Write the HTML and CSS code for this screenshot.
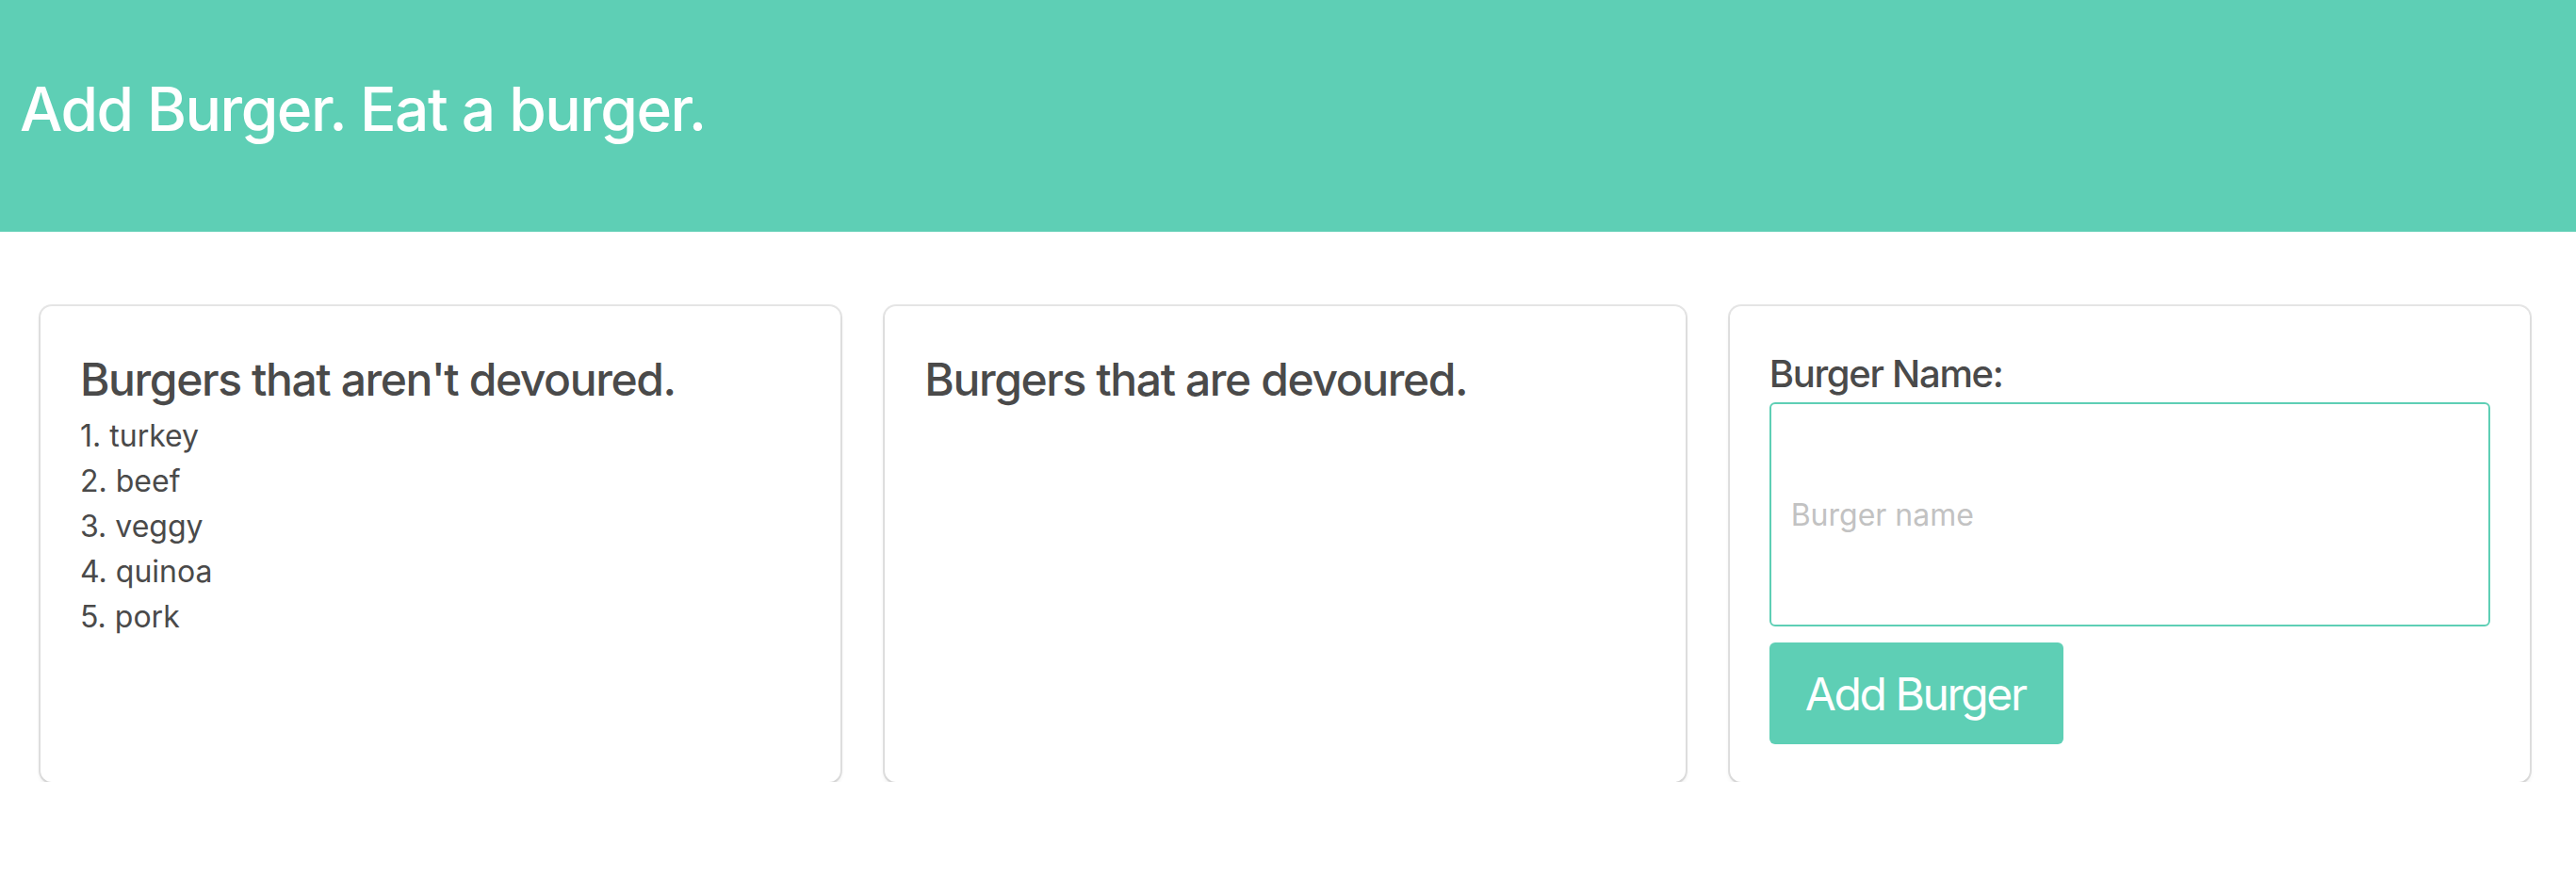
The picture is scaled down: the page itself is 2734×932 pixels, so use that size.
FILE: index.html
```html
<!DOCTYPE html>
<html lang="en">
<head>
<meta charset="utf-8">
<title>Burgers</title>
<link rel="stylesheet" href="styles.css">
</head>
<body>
<header class="hero">
  <h1 class="hero-title">Add Burger. Eat a burger.</h1>
</header>
<main class="columns">
  <section class="box">
    <h3 class="box-title">Burgers that aren't devoured.</h3>
    <ol class="burger-list">
      <li>1. turkey</li>
      <li>2. beef</li>
      <li>3. veggy</li>
      <li>4. quinoa</li>
      <li>5. pork</li>
    </ol>
  </section>
  <section class="box">
    <h3 class="box-title">Burgers that are devoured.</h3>
  </section>
  <section class="box">
    <form class="burger-form">
      <label class="label" for="burger">Burger Name:</label>
      <input class="input" id="burger" type="text" placeholder="Burger name">
      <button class="button" type="button">Add Burger</button>
    </form>
  </section>
</main>
</body>
</html>
```

FILE: styles.css
```css
* { box-sizing: border-box; }

html, body {
  margin: 0;
  padding: 0;
  background: #ffffff;
}

body {
  font-family: Inter, "Noto Sans", "Liberation Sans", sans-serif;
  color: #4a4a4a;
  font-size: 32px;
  line-height: 48px;
}

.hero {
  background: #5ecfb5;
  height: 246px;
  padding: 80px 21px 0;
}

.hero-title {
  margin: 0;
  color: #ffffff;
  font-size: 64px;
  line-height: 72px;
  font-weight: 500;
  letter-spacing: -1.5px;
}

.columns {
  display: flex;
  gap: 47px;
  padding: 79px 49px 0 43px;
}

.box {
  flex: 1 1 0;
  height: 505px;
  background: #ffffff;
  border-radius: 12px;
  box-shadow: 0 3px 5px rgba(10, 10, 10, 0.1), 0 0 0 2px rgba(10, 10, 10, 0.1);
  padding: 42px;
}

.box-title {
  margin: 0;
  font-size: 48px;
  line-height: 72px;
  font-weight: 500;
  color: #4a4a4a;
  letter-spacing: -1.4px;
}

.burger-list {
  list-style: none;
  margin: 0;
  padding: 0;
}

.burger-list li {
  font-size: 32px;
  line-height: 48px;
}

.burger-form {
  display: flex;
  flex-direction: column;
  align-items: flex-start;
}

.label {
  font-size: 40px;
  line-height: 60px;
  font-weight: 500;
  letter-spacing: -1.3px;
}

.input {
  width: 100%;
  height: 238px;
  border: 2px solid #5ecfb5;
  border-radius: 6px;
  padding: 0 21px;
  font-family: inherit;
  font-size: 32px;
  color: #4a4a4a;
  outline: none;
}

.input::placeholder {
  color: #c2c2c2;
}

.button {
  margin-top: 17px;
  width: 312px;
  height: 108px;
  padding: 0;
  background: #5ecfb5;
  color: #ffffff;
  border: none;
  border-radius: 6px;
  font-family: inherit;
  font-size: 48px;
  font-weight: 400;
  letter-spacing: -2.4px;
  text-indent: -2px;
}
```
